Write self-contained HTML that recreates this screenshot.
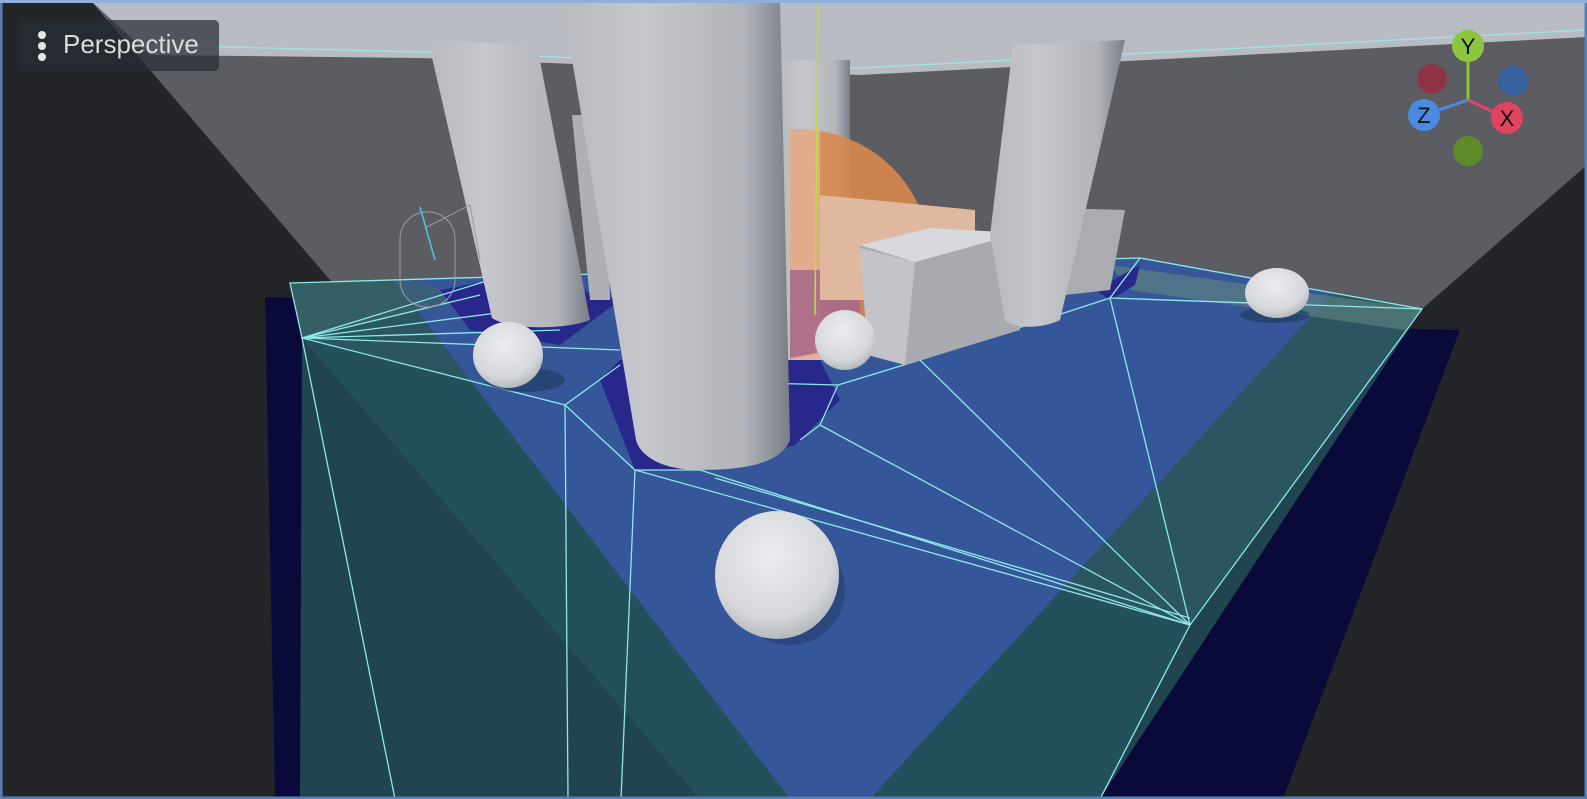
<!DOCTYPE html>
<html><head><meta charset="utf-8"><style>
html,body{margin:0;padding:0;background:#232529;}
.wrap{position:relative;width:1587px;height:799px;overflow:hidden;}
svg{position:absolute;left:0;top:0;}
.lab{position:absolute;left:19px;top:20px;width:200px;height:51px;background:rgba(40,44,52,0.72);border-radius:5px;}
.lab span{position:absolute;left:44px;top:9px;font:26px "Liberation Sans","DejaVu Sans",sans-serif;color:#dcdcdc;}
.dot{position:absolute;left:19px;width:8px;height:8px;border-radius:50%;background:#e6e6e6;}
</style></head><body><div class="wrap">
<svg width="1587" height="799" viewBox="0 0 1587 799">
<defs>
<linearGradient id="cyl" x1="0" x2="1" y1="0" y2="0">
<stop offset="0" stop-color="#b8bac0"/><stop offset="0.35" stop-color="#c6c7cc"/><stop offset="0.8" stop-color="#b2b4ba"/><stop offset="1" stop-color="#7a7d86"/></linearGradient>
<radialGradient id="sph" cx="0.45" cy="0.35" r="0.7"><stop offset="0" stop-color="#ecedf0"/><stop offset="0.7" stop-color="#d6d7db"/><stop offset="1" stop-color="#a9b0b2"/></radialGradient>
<clipPath id="floor"><polygon points="290,283 1140,258 1422,309 1100,799 300,799 302,338"/></clipPath>
</defs>
<rect width="1587" height="799" fill="#232529"/>
<polygon points="90,0 1587,0 1587,165 1422,309 450,420" fill="#5c5d62"/>
<polygon points="90,0 1587,0 1587,37 860,75 420,58 150,55" fill="#b9bbc3"/>
<polyline points="150,45 420,52 860,68 1587,30" fill="none" stroke="#9fe0e0" stroke-width="1.5"/>
<polygon points="265,297 1460,330 1283,799 275,799" fill="#0a0a3a"/>
<polygon points="290,283 1140,258 1422,309 1100,799 300,799 302,338" fill="#204450"/>
<polygon points="302,338 565,405 635,470 1190,625 1100,799 700,799" fill="#24505c"/>
<polygon points="290,283 1140,258 1422,309 1190,625 635,470 565,405 302,338" fill="#2b5560"/>
<polygon clip-path="url(#floor)" points="180,0 1600,0 870,799 790,799" fill="#36569a"/>
<polygon clip-path="url(#floor)" points="1110,265 1422,309 1405,330 1130,290" fill="#5a8080" opacity="0.7"/>
<polygon points="290,283 410,278 470,300 302,338" fill="#3c6565" opacity="0.6"/>
<polygon points="440,290 520,275 620,300 560,345 470,330" fill="#27288a"/>
<polygon points="600,380 635,470 700,470 795,445 840,400 820,360 790,340 620,360" fill="#28288a"/>
<polygon points="1095,290 1140,265 1135,285 1110,300" fill="#27288a"/>
<g fill="none" stroke="#8ee8ea" stroke-width="1.3">
<polygon points="290,283 1140,258 1422,309 1190,625 635,470 565,405 302,338"/>
<line x1="302" y1="338" x2="395" y2="799"/>
<line x1="565" y1="405" x2="568" y2="799"/>
<line x1="635" y1="470" x2="621" y2="799"/>
<line x1="1190" y1="625" x2="1100" y2="799"/>
<line x1="302" y1="338" x2="480" y2="295"/><line x1="302" y1="338" x2="520" y2="310"/>
<line x1="302" y1="338" x2="560" y2="330"/><line x1="302" y1="338" x2="620" y2="350"/>
<line x1="302" y1="338" x2="490" y2="280"/>
<line x1="565" y1="405" x2="620" y2="365"/>
<line x1="635" y1="470" x2="700" y2="470"/>
<line x1="700" y1="470" x2="1190" y2="625"/><line x1="715" y1="478" x2="1190" y2="618"/>
<line x1="820" y1="425" x2="1190" y2="625"/>
<line x1="820" y1="425" x2="838" y2="385"/><line x1="838" y1="385" x2="920" y2="360"/>
<line x1="838" y1="385" x2="650" y2="380"/>
<line x1="920" y1="360" x2="1190" y2="625"/><line x1="1110" y1="298" x2="1190" y2="625"/>
<line x1="1110" y1="298" x2="920" y2="360"/><line x1="1110" y1="298" x2="1422" y2="309"/>
<line x1="1140" y1="258" x2="1110" y2="298"/>
<line x1="820" y1="425" x2="800" y2="440"/>
</g>
<rect x="780" y="60" width="70" height="300" fill="url(#cyl)"/>
<polygon points="572,115 605,115 610,300 590,300" fill="#aeb0b6"/>
<path d="M790,130 A130,130 0 0 1 930,250 L930,340 L790,360 Z" fill="#d8884e" opacity="0.9"/>
<path d="M790,130 L820,130 L820,360 L790,360Z" fill="#e2b49a" opacity="0.8"/>
<path d="M790,270 L860,270 L860,345 L790,358Z" fill="#a86a8a" opacity="0.9"/>
<polygon points="820,195 975,210 975,300 820,300" fill="#e0b8a0"/>
<polygon points="1020,207 1125,210 1110,290 1020,300" fill="#aaacb2"/>
<polygon points="860,245 930,228 1020,233 1020,330 905,365 868,355" fill="#a8aab0"/>
<polygon points="860,245 930,228 1020,233 915,262" fill="#d8d9de"/>
<polygon points="860,248 915,262 905,365 868,355" fill="#c3c4c9"/>
<path d="M428,40 L537,45 L590,320 C565,330 510,330 492,318 Z" fill="url(#cyl)"/>
<path d="M1013,45 L1125,40 L1060,320 C1040,330 1010,328 1005,320 L990,235 Z" fill="url(#cyl)"/>
<path d="M562,0 L780,0 L790,440 C780,465 740,470 700,470 C660,470 640,455 636,440 Z" fill="url(#cyl)"/>
<line x1="745" y1="0" x2="748" y2="440" stroke="#9ab6e6" stroke-dasharray="14 18" stroke-width="1.2"/>
<line x1="818" y1="0" x2="815" y2="315" stroke="#b7e431" stroke-width="1.5"/>
<g fill="none" stroke="#9a9ca4" stroke-width="1">
<rect x="400" y="212" width="55" height="95" rx="27"/>
<path d="M425,228 L470,205 L480,260"/>
</g>
<line x1="420" y1="207" x2="435" y2="260" stroke="#4ac8e0" stroke-width="1.5"/>
<ellipse cx="525" cy="380" rx="40" ry="12" fill="#1e3a5a" opacity="0.6"/>
<ellipse cx="508" cy="355" rx="35" ry="33" fill="url(#sph)"/>
<ellipse cx="845" cy="340" rx="30" ry="30" fill="url(#sph)"/>
<ellipse cx="1275" cy="315" rx="35" ry="8" fill="#1e3a5a" opacity="0.6"/>
<ellipse cx="1277" cy="293" rx="32" ry="25" fill="url(#sph)"/>
<ellipse cx="790" cy="590" rx="55" ry="55" fill="#253e70" opacity="0.6"/>
<ellipse cx="777" cy="575" rx="62" ry="64" fill="url(#sph)"/>
<line x1="1468" y1="100" x2="1468" y2="58" stroke="#8cc63f" stroke-width="3"/>
<line x1="1468" y1="100" x2="1500" y2="115" stroke="#e04460" stroke-width="3"/>
<line x1="1468" y1="100" x2="1430" y2="113" stroke="#4a8ae0" stroke-width="3"/>
<circle cx="1432" cy="79" r="15" fill="#8e3444"/>
<circle cx="1513" cy="81" r="15" fill="#35619e"/>
<circle cx="1468" cy="151" r="15" fill="#5e8a2a"/>
<circle cx="1468" cy="46" r="16" fill="#8cc63f"/>
<circle cx="1507" cy="118" r="16" fill="#e04460"/>
<circle cx="1424" cy="115" r="16" fill="#4a8ae0"/>
<g font-family="Liberation Sans, sans-serif" font-size="22" fill="#111" text-anchor="middle">
<text x="1468" y="54">Y</text><text x="1507" y="126">X</text><text x="1424" y="123">Z</text></g>
<rect x="1" y="1" width="1585" height="797" fill="none" stroke="#5a7fb0" stroke-width="3"/>
<rect x="0" y="0" width="1587" height="3" fill="#8fb0dc"/>
</svg>
<div class="lab"><div class="dot" style="top:11px"></div><div class="dot" style="top:22px"></div><div class="dot" style="top:33px"></div><span>Perspective</span></div>
</div></body></html>
